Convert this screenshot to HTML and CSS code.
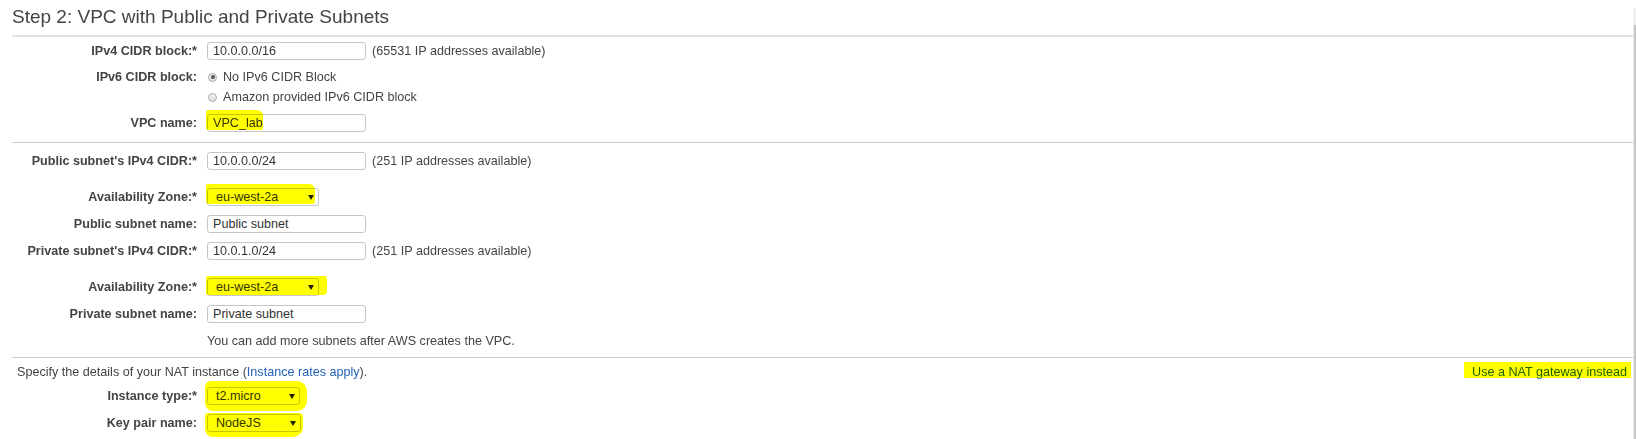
FILE: index.html
```html
<!DOCTYPE html>
<html lang="en">
<head>
<meta charset="utf-8">
<title>Step 2: VPC with Public and Private Subnets</title>
<link rel="stylesheet" href="styles.css">
</head>
<body>
<div class="page">
  <main class="main">
    <h1 class="title">Step 2: VPC with Public and Private Subnets</h1>

    <section class="sec sec-vpc">
      <div class="row">
        <label class="lbl">IPv4 CIDR block:*</label>
        <div class="ctl">
          <div class="field">10.0.0.0/16</div>
          <span class="hint">(65531 IP addresses available)</span>
        </div>
      </div>
      <div class="row row-top">
        <label class="lbl lbl-radio">IPv6 CIDR block:</label>
        <div class="radios">
          <div class="radio-line"><span class="radio checked"></span>No IPv6 CIDR Block</div>
          <div class="radio-line"><span class="radio"></span>Amazon provided IPv6 CIDR block</div>
        </div>
      </div>
      <div class="row">
        <label class="lbl">VPC name:</label>
        <div class="ctl">
          <div class="field">VPC_lab</div>
          <span class="hl hl-vpc"></span>
        </div>
      </div>
    </section>

    <section class="sec sec-subnets">
      <div class="row">
        <label class="lbl">Public subnet's IPv4 CIDR:*</label>
        <div class="ctl">
          <div class="field">10.0.0.0/24</div>
          <span class="hint">(251 IP addresses available)</span>
        </div>
      </div>
      <div class="row row-az">
        <label class="lbl">Availability Zone:*</label>
        <div class="ctl">
          <div class="select sel-az"><span>eu-west-2a</span><svg class="arrow" width="6" height="5" viewBox="0 0 6 5"><path d="M0 0H6L3 5Z" fill="#222"/></svg></div>
          <span class="hl hl-az1"></span>
        </div>
      </div>
      <div class="row">
        <label class="lbl">Public subnet name:</label>
        <div class="ctl"><div class="field">Public subnet</div></div>
      </div>
      <div class="row">
        <label class="lbl">Private subnet's IPv4 CIDR:*</label>
        <div class="ctl">
          <div class="field">10.0.1.0/24</div>
          <span class="hint">(251 IP addresses available)</span>
        </div>
      </div>
      <div class="row row-az">
        <label class="lbl">Availability Zone:*</label>
        <div class="ctl">
          <div class="select sel-az"><span>eu-west-2a</span><svg class="arrow" width="6" height="5" viewBox="0 0 6 5"><path d="M0 0H6L3 5Z" fill="#222"/></svg></div>
          <span class="hl hl-az2"></span>
        </div>
      </div>
      <div class="row">
        <label class="lbl">Private subnet name:</label>
        <div class="ctl"><div class="field">Private subnet</div></div>
      </div>
      <div class="row">
        <span class="lbl"></span>
        <div class="note">You can add more subnets after AWS creates the VPC.</div>
      </div>
    </section>

    <section class="sec sec-nat">
      <div class="nat-head">
        <span>Specify the details of your NAT instance (<a class="link" href="#">Instance rates apply</a>).</span>
        <a class="link nat-link" href="#">Use a NAT gateway instead<span class="hl hl-nat"></span></a>
      </div>
      <div class="row row-inst">
        <label class="lbl">Instance type:*</label>
        <div class="ctl">
          <div class="select sel-inst"><span>t2.micro</span><svg class="arrow" width="6" height="5" viewBox="0 0 6 5"><path d="M0 0H6L3 5Z" fill="#222"/></svg></div>
          <span class="hl hl-inst"></span>
        </div>
      </div>
      <div class="row">
        <label class="lbl">Key pair name:</label>
        <div class="ctl">
          <div class="select sel-key"><span>NodeJS</span><svg class="arrow" width="6" height="5" viewBox="0 0 6 5"><path d="M0 0H6L3 5Z" fill="#222"/></svg></div>
          <span class="hl hl-key"></span>
        </div>
      </div>
    </section>
  </main>
  <div class="scroll"><div class="scroll-line"></div></div>
</div>
</body>
</html>
```

FILE: styles.css
```css
* { box-sizing: border-box; }

html, body {
  margin: 0;
  padding: 0;
  background: #fff;
}

body {
  font-family: "Liberation Sans", Arial, sans-serif;
  font-size: 12.6px;
  color: #444;
}

.page {
  display: flex;
  width: 1636px;
  height: 439px;
  overflow: hidden;
}

.main {
  flex: 1;
  padding-left: 12px;
}

.scroll {
  width: 3px;
  margin-top: 8px;
  background: #f0f0f0;
  display: flex;
  flex-direction: column;
  align-items: flex-end;
}

.scroll-line {
  margin-top: 17px;
  width: 2px;
  flex: 1;
  background: #c6c6c6;
}

.title {
  margin: 0;
  padding: 5px 0 6px;
  font-size: 19px;
  line-height: 24px;
  font-weight: normal;
  color: #444;
  border-bottom: 2px solid #e2e2e2;
}

.sec {
  display: flex;
  flex-direction: column;
  gap: 9px;
  border-bottom: 1px solid #cccccc;
}

.sec-vpc { padding: 5px 0 10px; }
.sec-subnets { padding: 9px 0 7px; }
.sec-nat { padding: 5px 0 0; border-bottom: none; gap: 0; }

.row {
  display: grid;
  grid-template-columns: 185px 1fr;
  column-gap: 10px;
  align-items: center;
  min-height: 18px;
}

.row-top { align-items: start; }
.row-az { margin-top: 9px; }
.row-inst { margin: 6px 0 9px; }

.lbl {
  text-align: right;
  font-weight: bold;
  color: #444;
  line-height: 18px;
  white-space: nowrap;
}

.lbl-radio { line-height: 16px; }

.ctl {
  position: relative;
  display: flex;
  align-items: center;
}

.field {
  width: 159px;
  height: 18px;
  border: 1px solid #c6c6c6;
  border-radius: 3px;
  padding: 0 5px;
  line-height: 16px;
  color: #333;
  background: #fff;
  white-space: nowrap;
}

.hint {
  margin-left: 6px;
  line-height: 18px;
}

.select {
  height: 18px;
  border: 1px solid #c6c6c6;
  border-radius: 3px;
  padding: 0 4px 0 8px;
  line-height: 16px;
  color: #333;
  background: #fff;
  display: flex;
  align-items: center;
  justify-content: space-between;
}

.sel-az { width: 112px; }
.sel-inst { width: 93px; }
.sel-key { width: 94px; }

.arrow { display: block; flex: none; }

.radios {
  display: flex;
  flex-direction: column;
  gap: 4px;
}

.radio-line {
  display: flex;
  align-items: center;
  line-height: 16px;
  color: #444;
}

.radio {
  width: 9px;
  height: 9px;
  margin: 0 6px 0 1px;
  border-radius: 50%;
  border: 1px solid #a8a8a8;
  background: linear-gradient(#f6f6f6, #dcdcdc);
  position: relative;
}

.radio.checked::after {
  content: "";
  position: absolute;
  left: 1.5px;
  top: 1.5px;
  width: 4px;
  height: 4px;
  border-radius: 50%;
  background: #555;
}

.note {
  line-height: 18px;
  color: #444;
}

.nat-head {
  display: flex;
  justify-content: space-between;
  align-items: center;
  line-height: 18px;
  padding: 0 6px 0 5px;
}

.link {
  color: #1f62b8;
  text-decoration: none;
}

.nat-link { position: relative; }

/* highlighter marks drawn over the screenshot */
.hl {
  position: absolute;
  background: #ffff00;
  mix-blend-mode: multiply;
  pointer-events: none;
}

.hl-vpc { left: -1px; top: -4px; width: 57px; height: 20px; border-radius: 3px 6px 2px 2px; }
.hl-az1 { left: -1px; top: -4px; width: 109px; height: 20px; border-radius: 2px 6px 3px 3px; }
.hl-az2 { left: -1px; top: -2px; width: 121px; height: 19px; border-radius: 2px 3px 4px 2px; }
.hl-inst { left: -2px; top: -6px; width: 102px; height: 30px; border-radius: 6px 10px 10px 8px; }
.hl-key { left: -2px; top: -1px; width: 98px; height: 24px; border-radius: 3px 4px 10px 8px; }
.hl-nat { left: -8px; right: -4px; top: -1px; height: 16px; }
```
